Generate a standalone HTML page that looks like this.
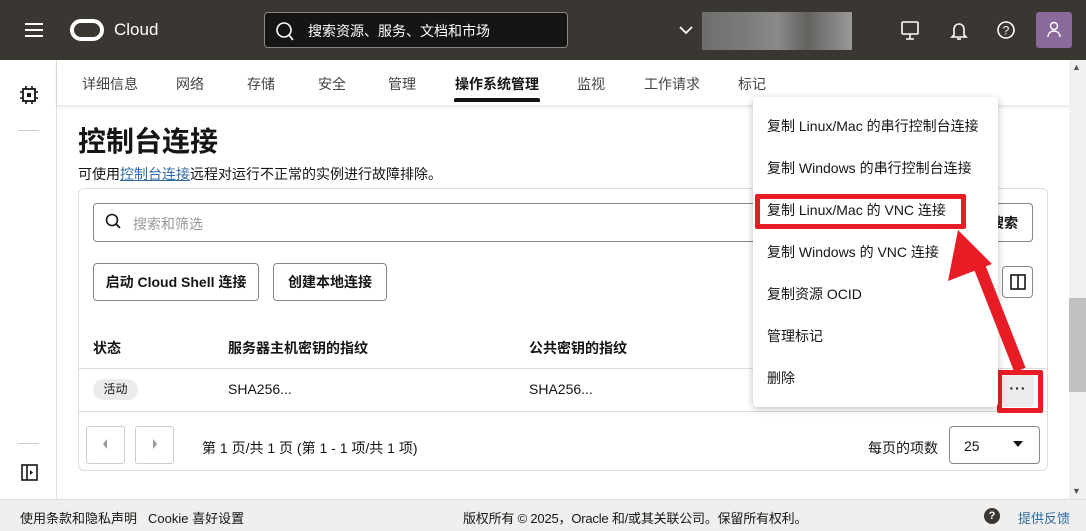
<!DOCTYPE html>
<html><head><meta charset="utf-8"><style>
*{box-sizing:border-box;margin:0;padding:0}
body{width:1086px;height:531px;overflow:hidden;background:#fff;font-family:"Liberation Sans","Noto Sans CJK SC",sans-serif;color:#161513;position:relative;font-size:14px}
.abs{position:absolute}
.hdr{left:0;top:0;width:1086px;height:60px;background:#3a3632}
.btn{position:absolute;border:1px solid #8a8884;border-radius:4px;background:#fff;font-size:14px;font-weight:bold;display:flex;align-items:center;justify-content:center}
.menu{left:753px;top:97px;width:245px;height:310px;background:#fff;border-radius:4px;box-shadow:0 2px 8px rgba(0,0,0,.25)}
.mi{position:absolute;left:14px;font-size:14px;color:#161513}
.tab{position:absolute;top:74px;font-size:14px;color:#444;white-space:nowrap}
</style></head><body>
<div class="abs hdr"></div>
<div class="abs" style="left:25px;top:23px;width:18px;height:2px;background:#fff;box-shadow:0 6px 0 #fff,0 12px 0 #fff"></div>
<div class="abs" style="left:70px;top:19px;width:34px;height:22px;border:4px solid #fff;border-radius:11px"></div>
<div class="abs" style="left:114px;top:20px;color:#fff;font-size:17px">Cloud</div>
<div class="abs" style="left:264px;top:12px;width:304px;height:36px;background:#161513;border:1px solid #8a8884;border-radius:4px"></div>
<svg class="abs" style="left:275px;top:21px" width="20" height="20"><circle cx="9" cy="9" r="7" stroke="#fff" stroke-width="1.6" fill="none"/><line x1="14" y1="14" x2="18" y2="19" stroke="#fff" stroke-width="1.6"/></svg>
<div class="abs" style="left:308px;top:21px;color:#fff;font-size:14px">搜索资源、服务、文档和市场</div>
<svg class="abs" style="left:679px;top:25px" width="14" height="10"><path d="M1 2L7 8L13 2" stroke="#fff" stroke-width="1.8" fill="none"/></svg>
<div class="abs" style="left:702px;top:12px;width:150px;height:38px;background:linear-gradient(90deg,#777 0,#888 30%,#999 50%,#6c6a68 70%,#aaa 100%);opacity:.85"></div>
<svg class="abs" style="left:900px;top:20px" width="20" height="22"><rect x="2" y="2" width="16" height="12" rx="1" stroke="#fff" stroke-width="1.6" fill="none"/><path d="M10 14V19M6 19H14" stroke="#fff" stroke-width="1.6"/></svg>
<svg class="abs" style="left:950px;top:20px" width="18" height="22"><path d="M4 15V9a5 5 0 0 1 10 0v6l2 2H2z" stroke="#fff" stroke-width="1.6" fill="none"/><path d="M7 19h4" stroke="#fff" stroke-width="1.6"/></svg>
<svg class="abs" style="left:996px;top:20px" width="20" height="20"><circle cx="10" cy="10" r="8" stroke="#fff" stroke-width="1.6" fill="none"/><text x="10" y="14.5" font-size="12" fill="#fff" text-anchor="middle" font-family="Liberation Sans">?</text></svg>
<div class="abs" style="left:1036px;top:12px;width:36px;height:36px;background:#8a6a9a;border-radius:3px"></div>
<svg class="abs" style="left:1046px;top:20px" width="16" height="20"><circle cx="8" cy="6" r="3.5" stroke="#fff" stroke-width="1.4" fill="none"/><path d="M2 17c0-4 3-6 6-6s6 2 6 6" stroke="#fff" stroke-width="1.4" fill="none"/></svg>
<!-- left rail -->
<div class="abs" style="left:56px;top:60px;width:1px;height:440px;background:#e4e1dd"></div>
<svg class="abs" style="left:19px;top:85px" width="20" height="20"><rect x="4" y="4" width="12" height="12" stroke="#161513" stroke-width="1.8" fill="none"/><rect x="8" y="8" width="4" height="4" fill="#161513"/><path d="M7 1v3M13 1v3M7 16v3M13 16v3M1 7h3M1 13h3M16 7h3M16 13h3" stroke="#161513" stroke-width="1.6"/></svg>
<div class="abs" style="left:18px;top:130px;width:21px;height:1px;background:#ccc"></div>
<div class="abs" style="left:18px;top:443px;width:21px;height:1px;background:#ccc"></div>
<svg class="abs" style="left:21px;top:464px" width="18" height="18"><rect x="1" y="1" width="15" height="15" stroke="#161513" stroke-width="1.6" fill="none"/><path d="M6 1v15" stroke="#161513" stroke-width="1.6"/><path d="M9 6l3 2.5L9 11z" fill="#161513"/></svg>
<!-- tabs -->
<div class="abs" style="left:57px;top:60px;width:1012px;height:45px;box-shadow:0 2px 3px rgba(0,0,0,.1)"></div>
<div class="tab" style="left:82px">详细信息</div>
<div class="tab" style="left:176px">网络</div>
<div class="tab" style="left:247px">存储</div>
<div class="tab" style="left:318px">安全</div>
<div class="tab" style="left:388px">管理</div>
<div class="tab" style="left:455px;color:#161513;font-weight:bold">操作系统管理</div>
<div class="tab" style="left:577px">监视</div>
<div class="tab" style="left:644px">工作请求</div>
<div class="tab" style="left:738px">标记</div>
<div class="abs" style="left:454px;top:98px;width:86px;height:4px;background:#161513;border-radius:2px 2px 0 0"></div>
<!-- scrollbar -->
<div class="abs" style="left:1069px;top:60px;width:17px;height:440px;background:#f1f1f1"></div>
<div class="abs" style="left:1069px;top:298px;width:17px;height:94px;background:#c1c1c1"></div>
<div class="abs" style="left:1072px;top:62px;font-size:9px;color:#555">▲</div>
<div class="abs" style="left:1072px;top:486px;font-size:9px;color:#555">▼</div>
<!-- content -->
<div class="abs" style="left:78px;top:120px;font-size:28px;font-weight:bold">控制台连接</div>
<div class="abs" style="left:78px;top:164px;font-size:14px">可使用<span style="color:#2c6ba3;text-decoration:underline">控制台连接</span>远程对运行不正常的实例进行故障排除。</div>
<div class="abs" style="left:78px;top:188px;width:970px;height:283px;border:1px solid #e0ddd9;border-radius:6px"></div>
<div class="abs" style="left:93px;top:203px;width:940px;height:39px;border:1px solid #8a8884;border-radius:4px"></div>
<svg class="abs" style="left:105px;top:213px" width="18" height="18"><circle cx="7" cy="7" r="5.5" stroke="#161513" stroke-width="1.6" fill="none"/><line x1="11" y1="11" x2="15" y2="15" stroke="#161513" stroke-width="1.8"/></svg>
<div class="abs" style="left:133px;top:214px;color:#9a9894">搜索和筛选</div>
<div class="btn" style="left:93px;top:263px;width:166px;height:38px">启动 Cloud Shell 连接</div>
<div class="btn" style="left:273px;top:263px;width:114px;height:38px">创建本地连接</div>
<div class="btn" style="left:960px;top:203px;width:73px;height:39px;justify-content:flex-end;padding-right:14px">搜索</div>
<div class="btn" style="left:1002px;top:266px;width:31px;height:32px"><svg width="16" height="16"><rect x="1" y="1" width="14" height="14" stroke="#161513" stroke-width="1.6" fill="none"/><path d="M8 1v14" stroke="#161513" stroke-width="1.6"/></svg></div>
<div class="abs" style="left:93px;top:338px;font-weight:bold">状态</div>
<div class="abs" style="left:228px;top:338px;font-weight:bold">服务器主机密钥的指纹</div>
<div class="abs" style="left:529px;top:338px;font-weight:bold">公共密钥的指纹</div>
<div class="abs" style="left:79px;top:368px;width:968px;height:1px;background:#e0ddd9"></div>
<div class="abs" style="left:93px;top:379px;width:45px;height:21px;background:#edebe9;border-radius:11px;font-size:12px;text-align:center;line-height:21px">活动</div>
<div class="abs" style="left:228px;top:381px">SHA256...</div>
<div class="abs" style="left:529px;top:381px">SHA256...</div>
<div class="abs" style="left:79px;top:411px;width:968px;height:1px;background:#e0ddd9"></div>
<div class="abs" style="left:86px;top:426px;width:39px;height:38px;border:1px solid #ccc;border-radius:3px"></div>
<div class="abs" style="left:135px;top:426px;width:39px;height:38px;border:1px solid #ccc;border-radius:3px"></div>
<svg class="abs" style="left:100px;top:437px" width="10" height="14"><path d="M7 2L3 7L7 12z" fill="#999"/></svg>
<svg class="abs" style="left:150px;top:437px" width="10" height="14"><path d="M3 2L7 7L3 12z" fill="#999"/></svg>
<div class="abs" style="left:202px;top:438px">第 1 页/共 1 页 (第 1 - 1 项/共 1 项)</div>
<div class="abs" style="left:868px;top:438px">每页的项数</div>
<div class="abs" style="left:949px;top:426px;width:91px;height:38px;border:1px solid #8a8884;border-radius:4px"></div>
<div class="abs" style="left:964px;top:438px">25</div>
<svg class="abs" style="left:1012px;top:440px" width="12" height="8"><path d="M1 1h10L6 7z" fill="#161513"/></svg>
<!-- kebab -->
<div class="abs" style="left:997px;top:370px;width:46px;height:43px;border:5px solid #e81c24;border-radius:2px"></div>
<div class="abs" style="left:1002px;top:375px;width:32px;height:32px;background:#edebe9;border-radius:3px;text-align:center;line-height:26px;font-weight:bold;letter-spacing:1px">···</div>
<!-- footer -->
<div class="abs" style="left:0;top:499px;width:1086px;height:32px;background:#f1efed;border-top:1px solid #ddd"></div>
<div class="abs" style="left:20px;top:508px;font-size:13px">使用条款和隐私声明</div>
<div class="abs" style="left:148px;top:508px;font-size:13px">Cookie 喜好设置</div>
<div class="abs" style="left:463px;top:508px;font-size:13px;letter-spacing:-0.2px">版权所有 © 2025，Oracle 和/或其关联公司。保留所有权利。</div>
<div class="abs" style="left:984px;top:508px;width:16px;height:16px;border-radius:50%;background:#3a3632;color:#fff;font-size:11px;text-align:center;line-height:16px;font-weight:bold">?</div>
<div class="abs" style="left:1018px;top:508px;font-size:13px;color:#2c6ba3">提供反馈</div>
<!-- menu -->
<div class="abs menu">
<div class="mi" style="top:19px">复制 Linux/Mac 的串行控制台连接</div>
<div class="mi" style="top:61px">复制 Windows 的串行控制台连接</div>
<div class="mi" style="top:103px">复制 Linux/Mac 的 VNC 连接</div>
<div class="mi" style="top:145px">复制 Windows 的 VNC 连接</div>
<div class="mi" style="top:187px">复制资源 OCID</div>
<div class="mi" style="top:229px">管理标记</div>
<div class="mi" style="top:271px">删除</div>
</div>
<div class="abs" style="left:755px;top:194px;width:211px;height:35px;border:5px solid #e81c24;border-radius:2px"></div>
<svg class="abs" style="left:0;top:0" width="1086" height="531"><line x1="980" y1="268" x2="1020" y2="370" stroke="#e81c24" stroke-width="12"/><polygon points="958,230 948,281 992,264" fill="#e81c24"/></svg>
</body></html>
